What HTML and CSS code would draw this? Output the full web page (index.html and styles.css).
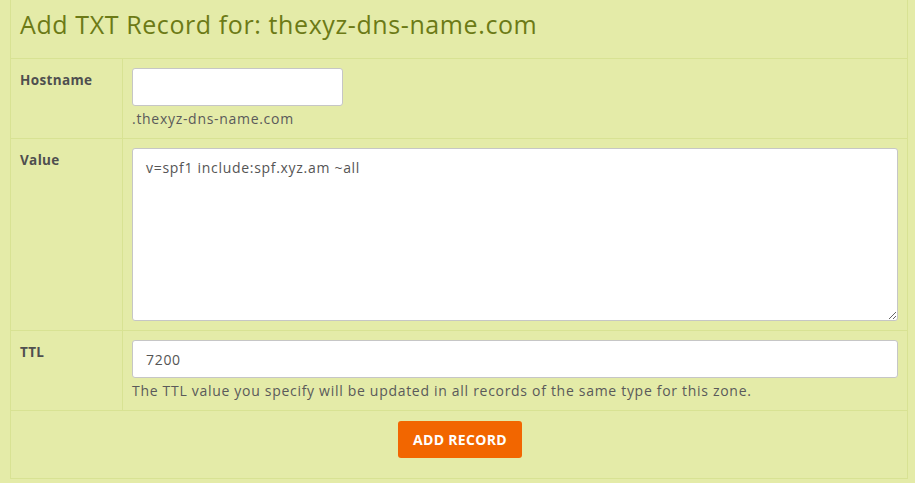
FILE: index.html
```html
<!DOCTYPE html>
<html>
<head>
<meta charset="utf-8">
<link rel="stylesheet" href="styles.css">
</head>
<body>
<div class="panel">
  <h1 class="title">Add TXT Record for: thexyz-dns-name.com</h1>
  <div class="row row-host">
    <div class="label">Hostname</div>
    <div class="field">
      <input class="input input-short" type="text">
      <div class="help">.thexyz-dns-name.com</div>
    </div>
  </div>
  <div class="row row-value">
    <div class="label">Value</div>
    <div class="field">
      <textarea class="textarea">v=spf1 include:spf.xyz.am ~all</textarea>
    </div>
  </div>
  <div class="row row-ttl">
    <div class="label">TTL</div>
    <div class="field">
      <input class="input" type="text" value="7200">
      <div class="help">The TTL value you specify will be updated in all records of the same type for this zone.</div>
    </div>
  </div>
  <div class="actions">
    <button class="btn" type="button">ADD RECORD</button>
  </div>
</div>
</body>
</html>
```
FILE: styles.css
```css
html, body {
  margin: 0;
  padding: 0;
  background: #e4eba8;
}
body {
  font-family: "Open Sans", "Noto Sans", sans-serif;
  color: #555;
  height: 483px;
  overflow: hidden;
}
.panel {
  margin-left: 10px;
  width: 896px;
  border-left: 1px solid #d8e293;
  border-right: 1px solid #d8e293;
  border-bottom: 1px solid #d8e293;
  background: #e4eba8;
}
.title {
  margin: 0;
  height: 59px;
  box-sizing: border-box;
  padding: 7px 0 0 9px;
  font-weight: normal;
  font-size: 25px;
  line-height: 34px;
  color: #6c7a16;
  letter-spacing: 0.6px;
  border-bottom: 1px solid #d8e293;
}
.row {
  display: grid;
  grid-template-columns: 112px 1fr;
  border-bottom: 1px solid #d8e293;
}
.label {
  border-right: 1px solid #d8e293;
  padding: 10px 0 0 9px;
  font-weight: bold;
  font-size: 13.5px;
  line-height: 22px;
  letter-spacing: 0.35px;
  color: #4f4f4f;
}
.field {
  padding: 9px 9px 0 9px;
}
.row-host { height: 79px; }
.row-value { height: 191px; }
.row-ttl { height: 79px; }
.input {
  display: block;
  box-sizing: border-box;
  width: 100%;
  height: 38px;
  border: 1px solid #c6c6c6;
  border-radius: 3px;
  background: #fff;
  padding: 0 13px;
  font-family: inherit;
  font-size: 14px;
  letter-spacing: 0.7px;
  color: #555;
  outline: none;
}
.input-short { width: 211px; }
.help {
  font-size: 14px;
  line-height: 20px;
  letter-spacing: 0.7px;
  margin-top: 3px;
  color: #5a5a5a;
}
.textarea {
  display: block;
  box-sizing: border-box;
  width: 100%;
  height: 173px;
  border: 1px solid #c6c6c6;
  border-radius: 3px;
  background: #fff;
  padding: 9px 13px;
  font-family: inherit;
  font-size: 14px;
  line-height: 20px;
  letter-spacing: 0.7px;
  color: #555;
  outline: none;
  resize: vertical;
  margin: 0;
}
.actions {
  height: 67px;
  display: flex;
  justify-content: center;
  align-items: flex-start;
  padding-top: 10px;
  box-sizing: border-box;
}
.btn {
  width: 124px;
  height: 37px;
  margin-left: 2px;
  background: #f26600;
  border: none;
  border-radius: 3px;
  color: #fff;
  font-family: inherit;
  font-weight: bold;
  font-size: 14px;
  letter-spacing: 0.3px;
  cursor: pointer;
}
```
